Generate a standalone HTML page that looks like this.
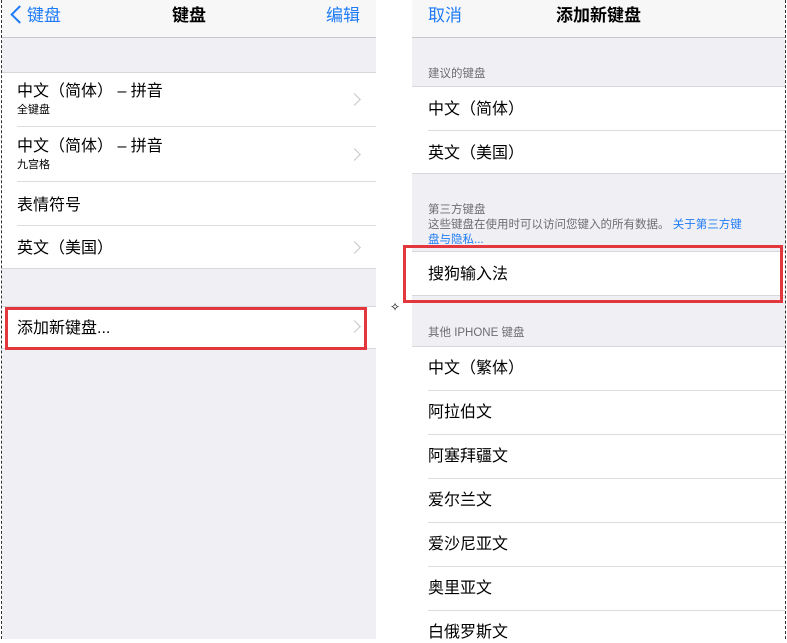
<!DOCTYPE html>
<html><head><meta charset="utf-8"><style>
*{margin:0;padding:0;box-sizing:border-box}
body{width:787px;height:639px;background:#fff;position:relative;overflow:hidden;font-family:"Liberation Sans","Noto Sans CJK SC",sans-serif;color:#000}
.a{position:absolute}
.g{background:#efeff4}
.w{background:#fff}
.nav{background:#f7f7f8;border-bottom:1px solid #c8c7cc;height:38px}
.t{position:absolute;font-size:16px;line-height:20px;white-space:nowrap;margin-top:2px}
.s{position:absolute;font-size:11px;line-height:13px;white-space:nowrap;margin-top:1px}
.h{position:absolute;font-size:11.5px;color:#6d6d72;white-space:nowrap;line-height:14px;margin-top:1px}
.ln{position:absolute;height:1px;background:#dcdce0}
.chev{position:absolute;width:9px;height:9px;border-right:1.6px solid #c7c7cc;border-top:1.6px solid #c7c7cc;transform:rotate(45deg)}
.blue{color:#1f7cf6}
.red{position:absolute;border:3px solid #e2383d}
</style></head><body>
<div class="a" style="left:1px;top:0;width:0;height:639px;border-left:1px dashed #333"></div>
<div class="a" style="left:785px;top:0;width:0;height:639px;border-left:1px dashed #333"></div>
<!-- left panel -->
<div class="a g" style="left:2px;top:0;width:374px;height:639px"></div>
<div class="a nav" style="left:2px;top:0;width:374px"></div>
<div class="a" style="left:13px;top:8px;width:13px;height:13px;border-left:2.8px solid #1f7cf6;border-bottom:2.8px solid #1f7cf6;transform:rotate(45deg)"></div>
<div class="t blue" style="left:27px;top:4px;font-size:17px">键盘</div>
<div class="t" style="left:172px;top:4px;font-size:17px;font-weight:bold">键盘</div>
<div class="t blue" style="left:326px;top:4px;font-size:17px">编辑</div>
<div class="a w" style="left:2px;top:72px;width:374px;height:197px;border-top:1px solid #d8d8dc;border-bottom:1px solid #d8d8dc"></div>
<div class="t" style="left:17px;top:80px">中文（简体） – 拼音</div>
<div class="s" style="left:17px;top:103px">全键盘</div>
<div class="chev" style="left:350px;top:95px"></div>
<div class="ln" style="left:17px;top:126px;width:359px"></div>
<div class="t" style="left:17px;top:135px">中文（简体） – 拼音</div>
<div class="s" style="left:17px;top:158px">九宫格</div>
<div class="chev" style="left:350px;top:150px"></div>
<div class="ln" style="left:17px;top:181px;width:359px"></div>
<div class="t" style="left:17px;top:194px">表情符号</div>
<div class="ln" style="left:17px;top:225px;width:359px"></div>
<div class="t" style="left:17px;top:237px">英文（美国）</div>
<div class="chev" style="left:350px;top:243px"></div>
<div class="a w" style="left:2px;top:306px;width:374px;height:43px;border-top:1px solid #d8d8dc;border-bottom:1px solid #d8d8dc"></div>
<div class="t" style="left:17px;top:317px">添加新键盘...</div>
<div class="chev" style="left:350px;top:322px"></div>
<div class="red" style="left:5px;top:307px;width:362px;height:43px"></div>
<div class="a" style="left:390px;top:300px;font-size:12px">✧</div>
<!-- right panel -->
<div class="a g" style="left:412px;top:0;width:373px;height:639px"></div>
<div class="a nav" style="left:412px;top:0;width:373px"></div>
<div class="t blue" style="left:428px;top:4px;font-size:17px">取消</div>
<div class="t" style="left:556px;top:4px;font-size:17px;font-weight:bold">添加新键盘</div>
<div class="h" style="left:428px;top:66px">建议的键盘</div>
<div class="a w" style="left:412px;top:86px;width:373px;height:88px;border-top:1px solid #d8d8dc;border-bottom:1px solid #d8d8dc"></div>
<div class="t" style="left:428px;top:98px">中文（简体）</div>
<div class="ln" style="left:428px;top:130px;width:357px"></div>
<div class="t" style="left:428px;top:142px">英文（美国）</div>
<div class="h" style="left:428px;top:202px">第三方键盘</div>
<div class="h" style="left:428px;top:217px">这些键盘在使用时可以访问您键入的所有数据。 <span class="blue">关于第三方键</span></div>
<div class="h blue" style="left:428px;top:232px;height:11px;overflow:hidden">盘与隐私...</div>
<div class="a w" style="left:412px;top:251px;width:373px;height:45px;border-top:1px solid #d8d8dc;border-bottom:1px solid #d8d8dc"></div>
<div class="t" style="left:428px;top:263px">搜狗输入法</div>
<div class="red" style="left:403px;top:245px;width:380px;height:58px"></div>
<div class="h" style="left:428px;top:325px">其他 IPHONE 键盘</div>
<div class="a w" style="left:412px;top:346px;width:373px;height:293px;border-top:1px solid #d8d8dc"></div>
<div class="t" style="left:428px;top:357px">中文（繁体）</div>
<div class="ln" style="left:428px;top:390px;width:357px"></div>
<div class="t" style="left:428px;top:401px">阿拉伯文</div>
<div class="ln" style="left:428px;top:434px;width:357px"></div>
<div class="t" style="left:428px;top:445px">阿塞拜疆文</div>
<div class="ln" style="left:428px;top:478px;width:357px"></div>
<div class="t" style="left:428px;top:489px">爱尔兰文</div>
<div class="ln" style="left:428px;top:522px;width:357px"></div>
<div class="t" style="left:428px;top:533px">爱沙尼亚文</div>
<div class="ln" style="left:428px;top:566px;width:357px"></div>
<div class="t" style="left:428px;top:577px">奥里亚文</div>
<div class="ln" style="left:428px;top:610px;width:357px"></div>
<div class="t" style="left:428px;top:621px">白俄罗斯文</div>
</body></html>
